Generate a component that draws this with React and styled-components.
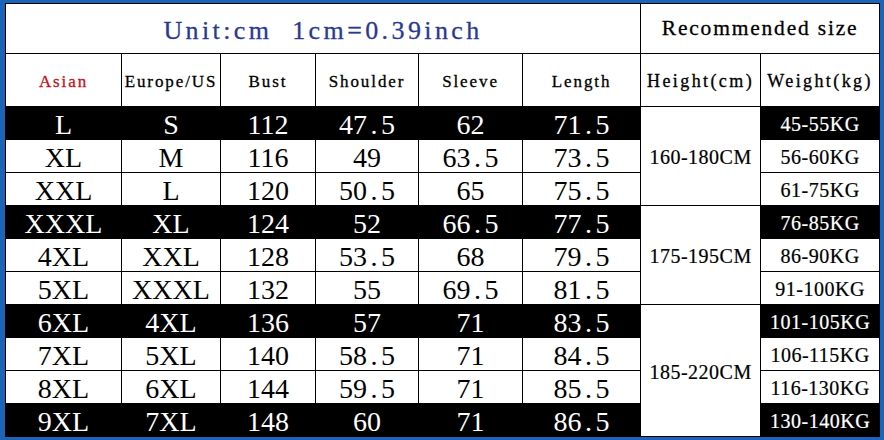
import React from "react";
import styled, { createGlobalStyle } from "styled-components";

const GlobalStyle = createGlobalStyle`
  html, body {
    margin: 0;
    padding: 0;
    background: #1b64b8;
    overflow: hidden;
  }
`;

const Frame = styled.div`
  width: 884px;
  height: 440px;
  box-sizing: border-box;
  padding: 3px 5px 3px 5px;
  background: #1b64b8;
`;

const Table = styled.table`
  width: 874px;
  height: 434px;
  table-layout: fixed;
  border-collapse: collapse;
  background: #fff;
`;

const Cell = styled.td`
  border: 1px solid #000;
  padding: 0;
  text-align: center;
  vertical-align: middle;
  white-space: nowrap;
  overflow: hidden;
  background: ${(p) => (p.dark ? "#000" : "#fff")};
  color: ${(p) => (p.dark ? "#fff" : "#000")};
`;

const TitleCell = styled(Cell)`
  height: 44px;
  padding-top: 5px;
  font-family: "Liberation Serif", serif;
  font-size: 26px;
  letter-spacing: 3.4px;
  color: #2b3990;
  -webkit-text-stroke: 0.3px #2b3990;
  white-space: pre;
`;

const RecommendCell = styled(Cell)`
  font-family: "Liberation Serif", serif;
  font-size: 21.5px;
  letter-spacing: 1.8px;
  -webkit-text-stroke: 0.3px #000;
`;

const HeadCell = styled(Cell)`
  height: 49px;
  padding-top: 3px;
  font-family: "Liberation Serif", serif;
  font-size: ${(p) => (p.big ? "18px" : "17px")};
  color: ${(p) => (p.red ? "#c4101a" : "#000")};
  -webkit-text-stroke: 0.3px ${(p) => (p.red ? "#c4101a" : "#000")};
  letter-spacing: ${(p) => (p.big ? "2.4px" : "1.9px")};
`;

const DataCell = styled(Cell)`
  height: 29px;
  padding-top: 3px;
  font-family: "Liberation Serif", serif;
  font-size: 28px;
  line-height: 1;
`;

const RangeCell = styled(Cell)`
  font-family: "Liberation Serif", serif;
  font-size: 20px;
  letter-spacing: 0.5px;
  line-height: 1;
  padding-top: 2px;
  -webkit-text-stroke: 0.2px ${(p) => (p.dark ? "#fff" : "#000")};
`;

const Dot = styled.span`
  display: inline-block;
  width: 0.5em;
  text-align: center;
`;

const columns = [
  { w: 116, label: "Asian", red: true },
  { w: 99, label: "Europe/US" },
  { w: 95, label: "Bust" },
  { w: 103, label: "Shoulder" },
  { w: 104, label: "Sleeve" },
  { w: 118, label: "Length" },
  { w: 120, label: "Height(cm)", big: true },
  { w: 119, label: "Weight(kg)", big: true },
];

const rows = [
  ["L", "S", "112", "47.5", "62", "71.5", "45-55KG"],
  ["XL", "M", "116", "49", "63.5", "73.5", "56-60KG"],
  ["XXL", "L", "120", "50.5", "65", "75.5", "61-75KG"],
  ["XXXL", "XL", "124", "52", "66.5", "77.5", "76-85KG"],
  ["4XL", "XXL", "128", "53.5", "68", "79.5", "86-90KG"],
  ["5XL", "XXXL", "132", "55", "69.5", "81.5", "91-100KG"],
  ["6XL", "4XL", "136", "57", "71", "83.5", "101-105KG"],
  ["7XL", "5XL", "140", "58.5", "71", "84.5", "106-115KG"],
  ["8XL", "6XL", "144", "59.5", "71", "85.5", "116-130KG"],
  ["9XL", "7XL", "148", "60", "71", "86.5", "130-140KG"],
];

// height ranges start on these rows and span a block
const heightGroups = {
  0: { label: "160-180CM", span: 3 },
  3: { label: "175-195CM", span: 3 },
  6: { label: "185-220CM", span: 4 },
};

const darkRows = [0, 3, 6, 9];

const Num = ({ value }) => {
  const parts = value.split(".");
  if (parts.length === 1) return value;
  return (
    <>
      {parts[0]}
      <Dot>.</Dot>
      {parts[1]}
    </>
  );
};

const App = () => {
  return (
    <>
      <GlobalStyle />
      <Frame>
        <Table>
          <colgroup>
            {columns.map((c) => (
              <col key={c.label} style={{ width: c.w }} />
            ))}
          </colgroup>
          <tbody>
            <tr>
              <TitleCell colSpan={6}>{"Unit:cm  1cm=0.39inch"}</TitleCell>
              <RecommendCell colSpan={2}>Recommended size</RecommendCell>
            </tr>
            <tr>
              {columns.map((c) => (
                <HeadCell key={c.label} red={c.red} big={c.big}>
                  {c.label}
                </HeadCell>
              ))}
            </tr>
            {rows.map((r, i) => {
              const dark = darkRows.includes(i);
              const group = heightGroups[i];
              return (
                <tr key={i}>
                  {r.slice(0, 6).map((v, j) => (
                    <DataCell key={j} dark={dark}>
                      <Num value={v} />
                    </DataCell>
                  ))}
                  {group && (
                    <RangeCell rowSpan={group.span}>{group.label}</RangeCell>
                  )}
                  <RangeCell dark={dark}>{r[6]}</RangeCell>
                </tr>
              );
            })}
          </tbody>
        </Table>
      </Frame>
    </>
  );
};

export default App;
